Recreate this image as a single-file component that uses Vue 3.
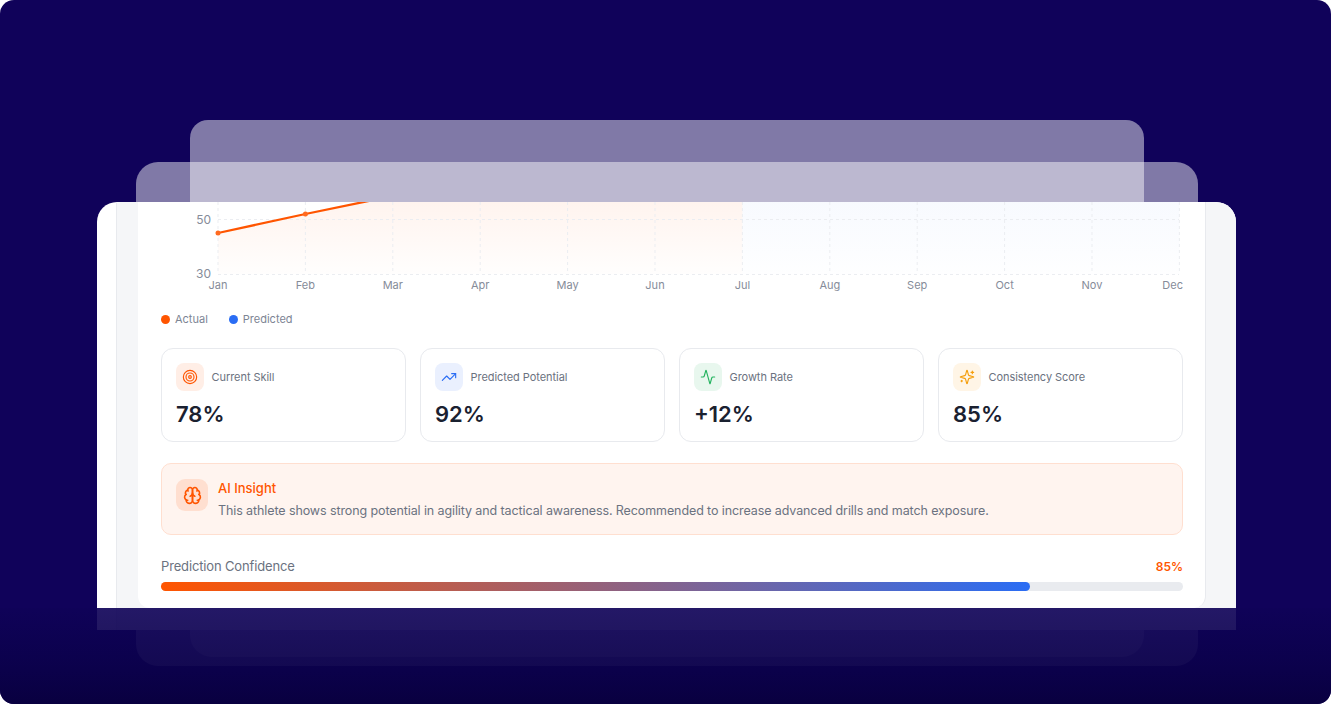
<script setup>
const months = ['Jan', 'Feb', 'Mar', 'Apr', 'May', 'Jun', 'Jul', 'Aug', 'Sep', 'Oct', 'Nov', 'Dec']
const stepX = 87.4
const xs = months.map((m, i) => 57 + i * stepX)

const stats = [
  { label: 'Current Skill', value: '78%', tone: 'orange', icon: 'target' },
  { label: 'Predicted Potential', value: '92%', tone: 'blue', icon: 'trend' },
  { label: 'Growth Rate', value: '+12%', tone: 'green', icon: 'activity' },
  { label: 'Consistency Score', value: '85%', tone: 'amber', icon: 'sparkles' }
]
</script>

<template>
  <div class="page">
    <div class="ghost ghost-back"></div>
    <div class="ghost ghost-mid"></div>

    <div class="front">
      <div class="panel">
        <div class="card">
          <svg class="chart" width="1022" height="92" viewBox="0 0 1022 92">
            <defs>
              <linearGradient id="fillOrange" x1="0" y1="0" x2="0" y2="1">
                <stop offset="0" stop-color="#ff5500" stop-opacity="0.065" />
                <stop offset="1" stop-color="#ff5500" stop-opacity="0.008" />
              </linearGradient>
              <linearGradient id="fillBlue" x1="0" y1="0" x2="0" y2="1">
                <stop offset="0" stop-color="#2a6df4" stop-opacity="0.035" />
                <stop offset="1" stop-color="#2a6df4" stop-opacity="0.005" />
              </linearGradient>
            </defs>
            <rect x="57" y="0" width="524.4" height="72" fill="url(#fillOrange)" />
            <rect x="581.4" y="0" width="437" height="72" fill="url(#fillBlue)" />
            <path d="M57 31 L144.4 12 L231.8 -6 L231.8 -8 L57 -8 Z" fill="#fff" />
            <g stroke="#ebedf1" stroke-width="1" stroke-dasharray="3 3">
              <line x1="57" x2="1018" y1="17.5" y2="17.5" />
              <line x1="57" x2="1018" y1="72.5" y2="72.5" />
              <line v-for="x in xs" :key="x" :x1="x" :x2="x" y1="0" y2="72" />
            </g>
            <path d="M57 31 L144.4 12 L231.8 -6" fill="none" stroke="#ff5500" stroke-width="2.3" />
            <circle cx="57" cy="31" r="2.5" fill="#ff6a20" />
            <circle cx="144.4" cy="12" r="2.5" fill="#ff6a20" />
            <text class="tick" x="50" y="22" text-anchor="end">50</text>
            <text class="tick" x="50" y="76" text-anchor="end">30</text>
            <text
              v-for="(m, i) in months"
              :key="m"
              class="tick small"
              :x="i === 11 ? 1022 : xs[i]"
              y="87"
              :text-anchor="i === 11 ? 'end' : 'middle'"
            >{{ m }}</text>
          </svg>

          <div class="legend">
            <span class="legend-item"><i class="dot dot-orange"></i>Actual</span>
            <span class="legend-item"><i class="dot dot-blue"></i>Predicted</span>
          </div>

          <div class="stats">
            <div v-for="s in stats" :key="s.label" class="stat">
              <div class="stat-head">
                <span class="icon-box" :class="s.tone">
                  <svg width="16" height="16" viewBox="0 0 24 24" fill="none" stroke="currentColor" stroke-width="1.7" stroke-linecap="round" stroke-linejoin="round">
                    <template v-if="s.icon === 'target'">
                      <circle cx="12" cy="12" r="10" />
                      <circle cx="12" cy="12" r="6" />
                      <circle cx="12" cy="12" r="2" />
                    </template>
                    <template v-else-if="s.icon === 'trend'">
                      <polyline points="22 7 13.5 15.5 8.5 10.5 2 17" />
                      <polyline points="16 7 22 7 22 13" />
                    </template>
                    <template v-else-if="s.icon === 'activity'">
                      <path d="M22 12h-2.48a2 2 0 0 0-1.93 1.46l-2.35 8.36a.25.25 0 0 1-.48 0L9.24 2.18a.25.25 0 0 0-.48 0l-2.35 8.36A2 2 0 0 1 4.49 12H2" />
                    </template>
                    <template v-else>
                      <path d="M9.937 15.5A2 2 0 0 0 8.5 14.063l-6.135-1.582a.5.5 0 0 1 0-.962L8.5 9.936A2 2 0 0 0 9.937 8.5l1.582-6.135a.5.5 0 0 1 .963 0L14.063 8.5A2 2 0 0 0 15.5 9.937l6.135 1.581a.5.5 0 0 1 0 .964L15.5 14.063a2 2 0 0 0-1.437 1.437l-1.582 6.135a.5.5 0 0 1-.963 0z" />
                      <path d="M20 3v4" />
                      <path d="M22 5h-4" />
                      <path d="M4 17v2" />
                      <path d="M5 18H3" />
                    </template>
                  </svg>
                </span>
                <span class="stat-label">{{ s.label }}</span>
              </div>
              <div class="stat-value">{{ s.value }}</div>
            </div>
          </div>

          <div class="insight">
            <span class="insight-icon">
              <svg width="19" height="19" viewBox="0 0 24 24" fill="none" stroke="currentColor" stroke-width="2" stroke-linecap="round" stroke-linejoin="round">
                <path d="M12 5a3 3 0 1 0-5.997.125 4 4 0 0 0-2.526 5.77 4 4 0 0 0 .556 6.588A4 4 0 1 0 12 18Z" />
                <path d="M12 5a3 3 0 1 1 5.997.125 4 4 0 0 1 2.526 5.77 4 4 0 0 1-.556 6.588A4 4 0 1 1 12 18Z" />
                <path d="M15 13a4.5 4.5 0 0 1-3-4 4.5 4.5 0 0 1-3 4" />
                <path d="M17.599 6.5a3 3 0 0 0 .399-1.375" />
                <path d="M6.003 5.125A3 3 0 0 0 6.401 6.5" />
                <path d="M3.477 10.896a4 4 0 0 1 .585-.396" />
                <path d="M19.938 10.5a4 4 0 0 1 .585.396" />
                <path d="M6 18a4 4 0 0 1-1.967-.516" />
                <path d="M19.967 17.484A4 4 0 0 1 18 18" />
              </svg>
            </span>
            <div class="insight-body">
              <div class="insight-title">AI Insight</div>
              <div class="insight-text">This athlete shows strong potential in agility and tactical awareness. Recommended to increase advanced drills and match exposure.</div>
            </div>
          </div>

          <div class="confidence">
            <div class="confidence-head">
              <span class="confidence-label">Prediction Confidence</span>
              <span class="confidence-value">85%</span>
            </div>
            <div class="track">
              <div class="fill" style="width: 85%"></div>
            </div>
          </div>
        </div>
      </div>
    </div>

    <div class="fade"></div>
  </div>
</template>

<style scoped>
.page {
  position: relative;
  box-sizing: border-box;
  width: 1331px;
  height: 704px;
  padding: 202px 95px 0 97px;
  overflow: hidden;
  border-radius: 14px;
  background: #10025a;
  font-family: Inter, "Liberation Sans", sans-serif;
}

.ghost {
  position: absolute;
  border-radius: 18px 18px 22px 22px;
  background: rgba(255, 255, 255, 0.47);
}
.ghost-back {
  left: 190px;
  top: 120px;
  width: 954px;
  height: 537px;
}
.ghost-mid {
  left: 136px;
  top: 162px;
  width: 1062px;
  height: 504px;
  border-radius: 22px;
}

.front {
  position: relative;
  height: 428px;
  padding-left: 19px;
  overflow: hidden;
  border-radius: 20px 20px 0 0;
  background: #fff;
}

.panel {
  box-sizing: border-box;
  height: 100%;
  padding: 0 30px 0 21px;
  border-left: 1px solid #e8eaee;
  background: #f5f6f8;
}

.card {
  box-sizing: border-box;
  height: 406px;
  padding: 0 22px 0 23px;
  border-right: 1px solid #e8eaee;
  border-radius: 0 0 12px 12px;
  background: #fff;
}

.chart {
  display: block;
}
.tick {
  fill: #868c99;
  font-size: 12px;
}
.tick.small {
  font-size: 11px;
}

.legend {
  display: flex;
  gap: 21px;
  margin-top: 18px;
  height: 14px;
}
.legend-item {
  display: flex;
  align-items: center;
  gap: 5px;
  color: #7d8594;
  font-size: 11px;
}
.dot {
  width: 9px;
  height: 9px;
  border-radius: 50%;
}
.dot-orange {
  background: #ff5500;
}
.dot-blue {
  background: #2a6df4;
}

.stats {
  display: grid;
  grid-template-columns: repeat(4, 1fr);
  gap: 14px;
  margin-top: 22px;
}
.stat {
  box-sizing: border-box;
  height: 94px;
  padding: 14px;
  border: 1px solid #e8eaee;
  border-radius: 12px;
  background: #fff;
}
.stat-head {
  display: flex;
  align-items: center;
  gap: 7.5px;
}
.icon-box {
  display: flex;
  align-items: center;
  justify-content: center;
  width: 28px;
  height: 28px;
  border-radius: 8px;
}
.icon-box.orange {
  background: #ffeee6;
  color: #ff5500;
}
.icon-box.blue {
  background: #eaf0fe;
  color: #2a6df4;
}
.icon-box.green {
  background: #e8f7ee;
  color: #22b35e;
}
.icon-box.amber {
  background: #fff5e6;
  color: #f59e0b;
}
.stat-label {
  color: #6b7280;
  font-size: 11px;
  letter-spacing: -0.05px;
}
.stat-value {
  margin-top: 7.5px;
  color: #1a2130;
  font-size: 22px;
  font-weight: 600;
  line-height: 30px;
}

.insight {
  display: flex;
  gap: 10px;
  box-sizing: border-box;
  height: 72px;
  margin-top: 21px;
  padding: 15px 14px;
  border: 1px solid #ffdfd0;
  border-radius: 10px;
  background: #fff4ef;
}
.insight-icon {
  display: flex;
  flex: none;
  align-items: center;
  justify-content: center;
  width: 32px;
  height: 32px;
  border-radius: 9px;
  background: #ffdfd0;
  color: #ff5500;
}
.insight-title {
  color: #ff5500;
  font-size: 13px;
  font-weight: 500;
  line-height: 18px;
}
.insight-text {
  margin-top: 5px;
  color: #6b7280;
  font-size: 12.5px;
  letter-spacing: -0.1px;
  line-height: 18px;
  white-space: nowrap;
}

.confidence {
  margin-top: 23px;
}
.confidence-head {
  display: flex;
  align-items: center;
  justify-content: space-between;
  height: 16px;
}
.confidence-label {
  color: #6b7280;
  font-size: 13px;
  letter-spacing: -0.15px;
}
.confidence-value {
  color: #ff5500;
  font-size: 12px;
  font-weight: 600;
}
.track {
  height: 9px;
  margin-top: 8px;
  border-radius: 5px;
  background: #e9ebef;
}
.fill {
  height: 100%;
  border-radius: 5px;
  background: linear-gradient(90deg, #ff5500, #2a6df4);
}

.fade {
  position: absolute;
  left: 0;
  right: 0;
  top: 608px;
  bottom: 0;
  background: linear-gradient(180deg, rgba(15, 2, 88, 0.91) 0%, rgba(11, 1, 75, 0.93) 60%, #090040 100%);
}
</style>

<style>
body {
  background: #fff;
}
</style>
